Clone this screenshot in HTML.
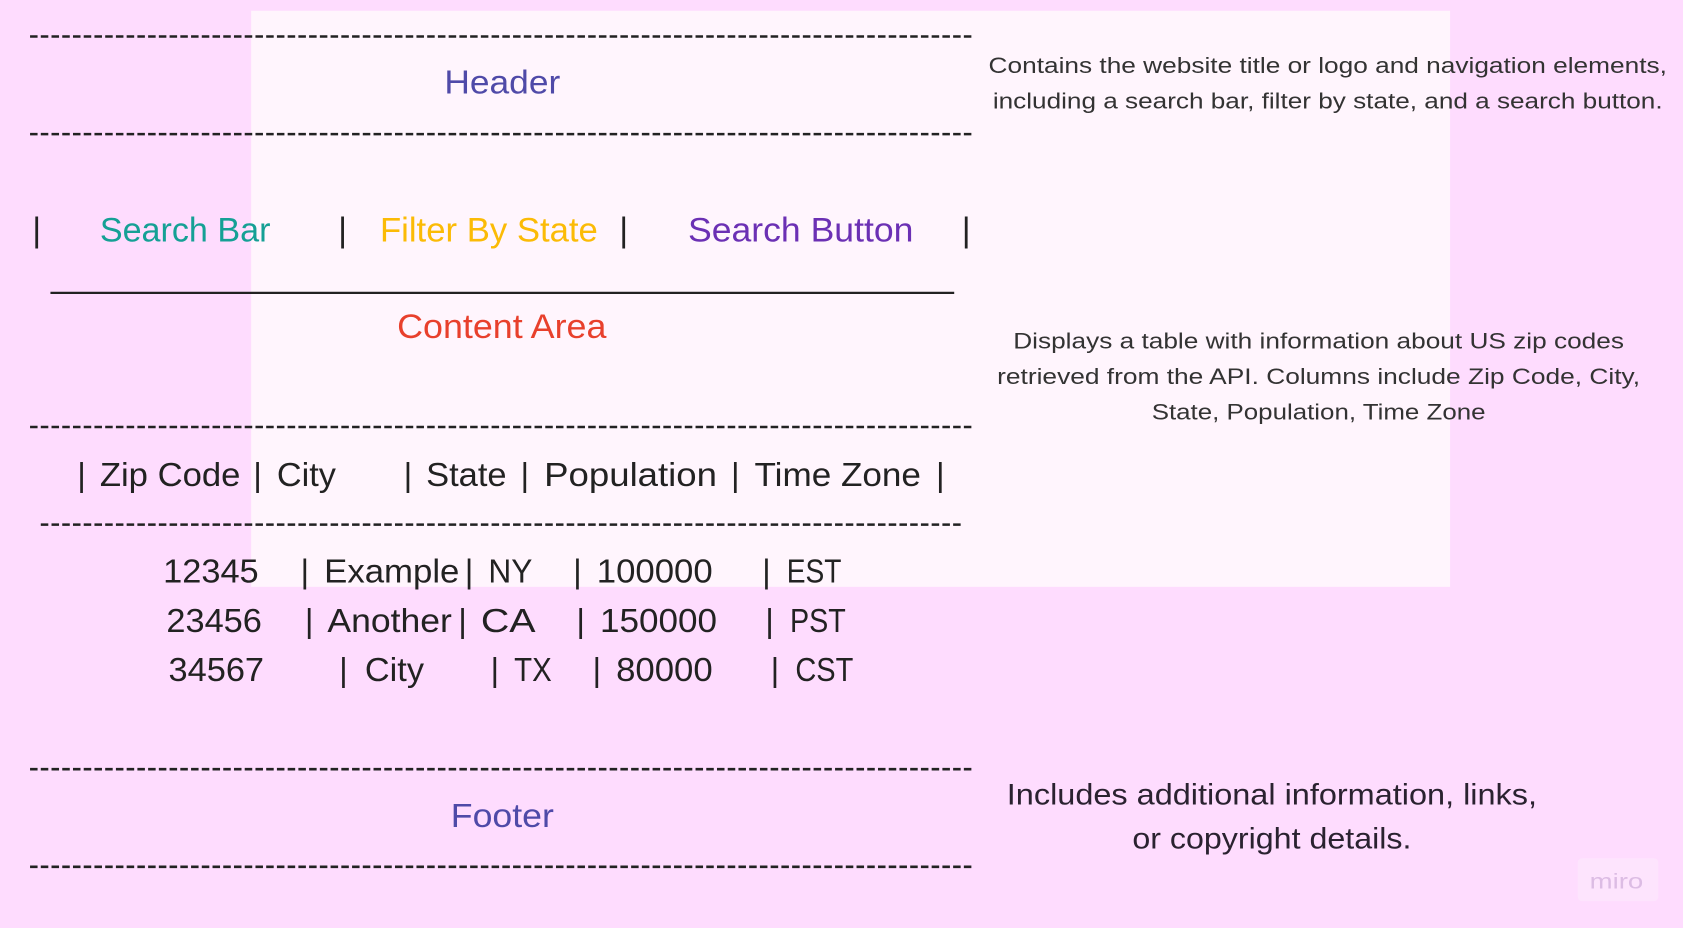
<!DOCTYPE html>
<html><head><meta charset="utf-8"><style>
html,body{margin:0;padding:0;width:1683px;height:928px;overflow:hidden;background:#fedcfe}
svg{display:block}
text{font-family:"Liberation Sans",sans-serif}
</style></head><body>
<svg width="1683" height="928" viewBox="0 0 1568 865" preserveAspectRatio="none">
<rect width="1568" height="865" fill="#fedcfe"/>
<rect x="234" y="10" width="1117" height="537" fill="#fff5fd"/>
<g stroke="#222" stroke-width="2.4" stroke-dasharray="7 3">
<line x1="28" y1="34" x2="908" y2="34"/>
<line x1="28" y1="125" x2="908" y2="125"/>
<line x1="28" y1="398" x2="908" y2="398"/>
<line x1="38" y1="489" x2="897" y2="489"/>
<line x1="28" y1="717" x2="908" y2="717"/>
<line x1="28" y1="808" x2="908" y2="808"/>
</g>
<line x1="47" y1="273" x2="889" y2="273" stroke="#222" stroke-width="2"/>
<g>
<text x="414" y="87" font-size="31" fill="#4f4aa8" textLength="108" lengthAdjust="spacingAndGlyphs">Header</text>
<g font-size="32" fill="#222">
<text x="30" y="225">|</text><text x="315" y="225">|</text><text x="577" y="225">|</text><text x="896" y="225">|</text>
</g>
<text x="93" y="225" font-size="32" fill="#15a095" textLength="159" lengthAdjust="spacingAndGlyphs">Search Bar</text>
<text x="354" y="225" font-size="32" fill="#fbbb06" textLength="203" lengthAdjust="spacingAndGlyphs">Filter By State</text>
<text x="641" y="225" font-size="32" fill="#6b30b4" textLength="210" lengthAdjust="spacingAndGlyphs">Search Button</text>
<text x="370" y="315" font-size="32" fill="#e8402c" textLength="195" lengthAdjust="spacingAndGlyphs">Content Area</text>
<g font-size="31" fill="#222">
<text x="72" y="453">|</text><text x="93" y="453" textLength="131" lengthAdjust="spacingAndGlyphs">Zip Code</text>
<text x="236" y="453">|</text><text x="258" y="453" textLength="55" lengthAdjust="spacingAndGlyphs">City</text>
<text x="376" y="453">|</text><text x="397" y="453" textLength="75" lengthAdjust="spacingAndGlyphs">State</text>
<text x="485" y="453">|</text><text x="507" y="453" textLength="161" lengthAdjust="spacingAndGlyphs">Population</text>
<text x="681" y="453">|</text><text x="703" y="453" textLength="155" lengthAdjust="spacingAndGlyphs">Time Zone</text>
<text x="872" y="453">|</text>

<text x="152" y="543" textLength="89" lengthAdjust="spacingAndGlyphs">12345</text><text x="280" y="543">|</text>
<text x="302" y="543" textLength="126" lengthAdjust="spacingAndGlyphs">Example</text><text x="433" y="543">|</text>
<text x="455" y="543" textLength="41" lengthAdjust="spacingAndGlyphs">NY</text><text x="534" y="543">|</text>
<text x="556" y="543" textLength="108" lengthAdjust="spacingAndGlyphs">100000</text><text x="710" y="543">|</text>
<text x="733" y="543" textLength="51" lengthAdjust="spacingAndGlyphs">EST</text>

<text x="155" y="589" textLength="89" lengthAdjust="spacingAndGlyphs">23456</text><text x="284" y="589">|</text>
<text x="305" y="589" textLength="116" lengthAdjust="spacingAndGlyphs">Another</text><text x="427" y="589">|</text>
<text x="448" y="589" textLength="51" lengthAdjust="spacingAndGlyphs">CA</text><text x="537" y="589">|</text>
<text x="559" y="589" textLength="109" lengthAdjust="spacingAndGlyphs">150000</text><text x="713" y="589">|</text>
<text x="736" y="589" textLength="52" lengthAdjust="spacingAndGlyphs">PST</text>

<text x="157" y="635" textLength="89" lengthAdjust="spacingAndGlyphs">34567</text><text x="316" y="635">|</text>
<text x="340" y="635" textLength="55" lengthAdjust="spacingAndGlyphs">City</text><text x="457" y="635">|</text>
<text x="479" y="635" textLength="35" lengthAdjust="spacingAndGlyphs">TX</text><text x="552" y="635">|</text>
<text x="574" y="635" textLength="90" lengthAdjust="spacingAndGlyphs">80000</text><text x="718" y="635">|</text>
<text x="741" y="635" textLength="54" lengthAdjust="spacingAndGlyphs">CST</text>
</g>
<text x="420" y="771" font-size="31" fill="#4f4aa8" textLength="96" lengthAdjust="spacingAndGlyphs">Footer</text>
<g font-size="21" fill="#333">
<text x="921" y="68" textLength="632" lengthAdjust="spacingAndGlyphs">Contains the website title or logo and navigation elements,</text>
<text x="925" y="101" textLength="624" lengthAdjust="spacingAndGlyphs">including a search bar, filter by state, and a search button.</text>
<text x="944" y="325" textLength="569" lengthAdjust="spacingAndGlyphs">Displays a table with information about US zip codes</text>
<text x="929" y="358" textLength="599" lengthAdjust="spacingAndGlyphs">retrieved from the API. Columns  include Zip Code, City,</text>
<text x="1073" y="391" textLength="311" lengthAdjust="spacingAndGlyphs">State, Population, Time Zone</text>
</g>
<g font-size="28" fill="#2a2230">
<text x="938" y="750" textLength="494" lengthAdjust="spacingAndGlyphs">Includes additional information, links,</text>
<text x="1055" y="791" textLength="260" lengthAdjust="spacingAndGlyphs">or copyright details.</text>
</g>
<rect x="1470" y="800" width="75" height="40" rx="4" fill="#fde4fd"/>
<text x="1481" y="828" font-size="20" fill="#dcbce4" textLength="50" lengthAdjust="spacingAndGlyphs">miro</text>
</g>
</svg>
</body></html>
